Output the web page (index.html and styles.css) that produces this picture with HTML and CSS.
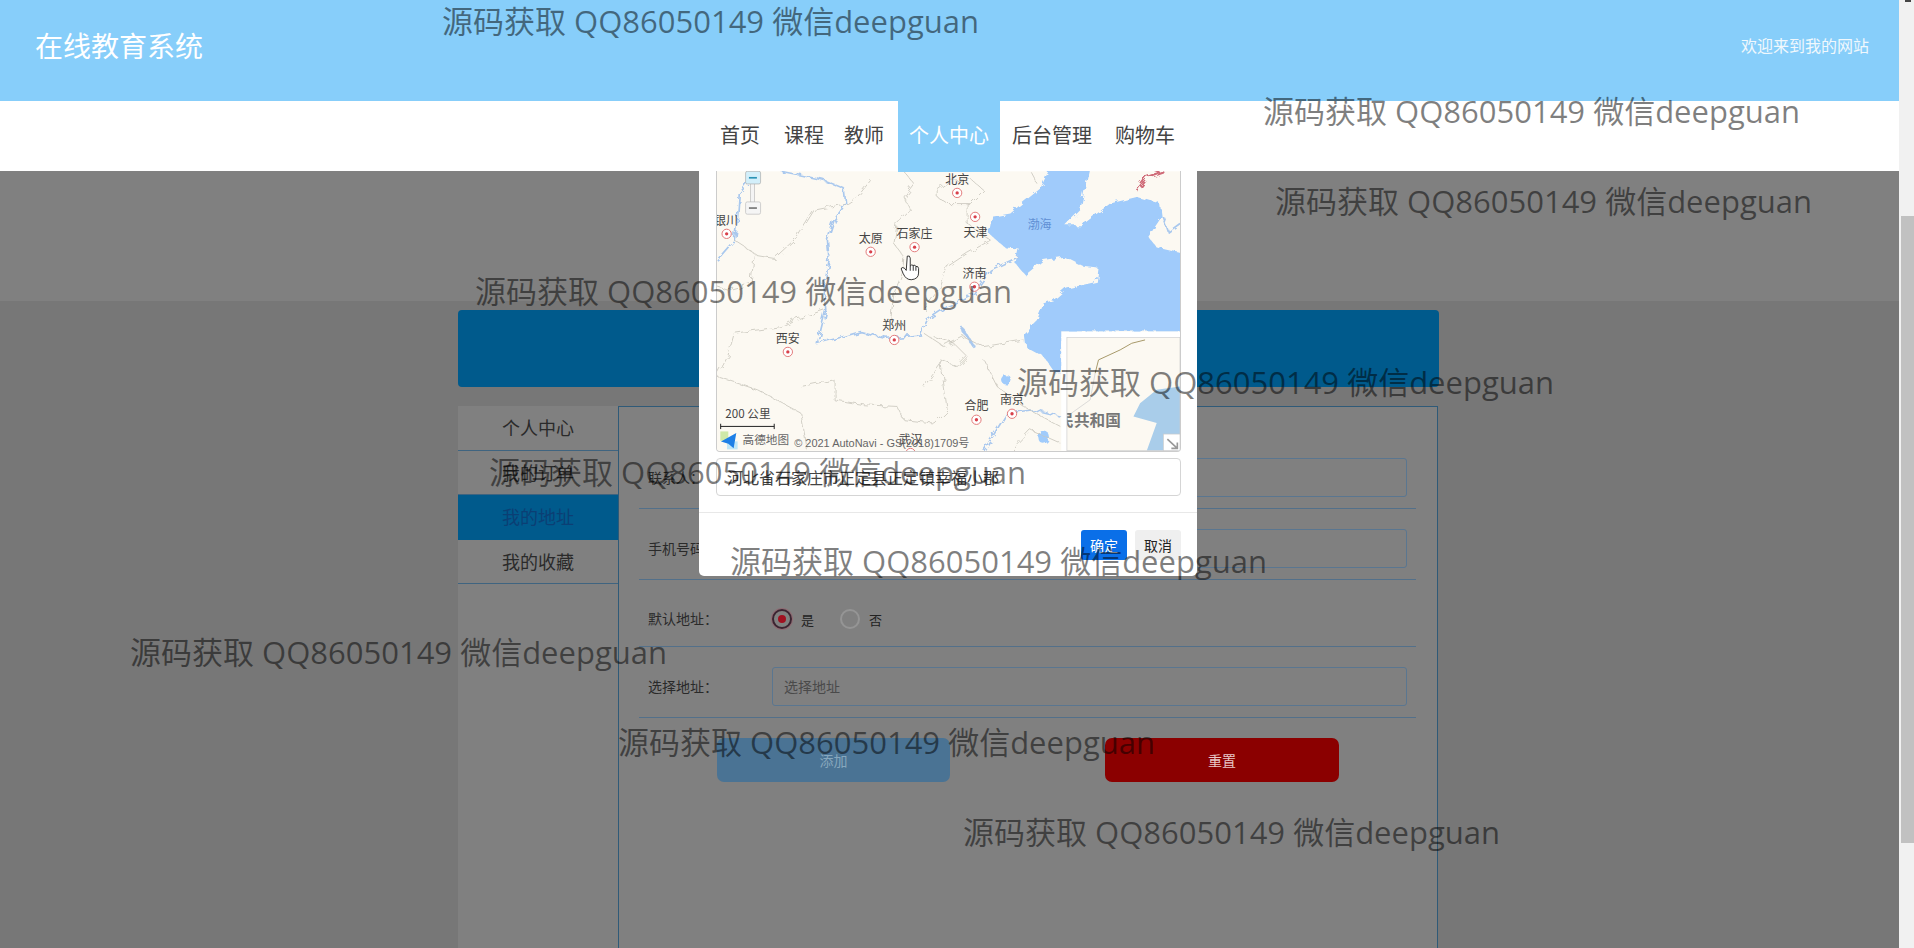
FILE: index.html
```html
<!DOCTYPE html>
<html lang="zh-CN">

<head>
    <meta charset="UTF-8">
    <title>在线教育系统</title>
    <link rel="stylesheet" href="styles.css">
</head>

<body>
    <div class="page">
        <div class="view">
            <header class="top">
                <div class="top-title">在线教育系统</div>
                <div class="top-hello">欢迎来到我的网站</div>
            </header>

            <nav class="nav">
                <a class="nav-item">首页</a>
                <a class="nav-item">课程</a>
                <a class="nav-item nav-tight">教师</a>
                <a class="nav-item nav-active">个人中心</a>
                <a class="nav-item nav-after">后台管理</a>
                <a class="nav-item">购物车</a>
            </nav>

            <main class="content">
                <div class="hero"></div>

                <section class="lower">
                    <div class="banner"></div>

                    <div class="account">
                        <ul class="side">
                            <li class="side-item">个人中心</li>
                            <li class="side-item">我的订单</li>
                            <li class="side-item side-active">我的地址</li>
                            <li class="side-item">我的收藏</li>
                        </ul>

                        <form class="panel">
                            <div class="row">
                                <label class="row-label">联系人：</label>
                                <input class="row-input" type="text">
                            </div>
                            <div class="row">
                                <label class="row-label">手机号码：</label>
                                <input class="row-input" type="text">
                            </div>
                            <div class="row row-radio">
                                <label class="row-label">默认地址：</label>
                                <span class="radio radio-on"></span>
                                <span class="radio-text">是</span>
                                <span class="radio"></span>
                                <span class="radio-text">否</span>
                            </div>
                            <div class="row">
                                <label class="row-label">选择地址：</label>
                                <input class="row-input" type="text" placeholder="选择地址">
                            </div>
                            <div class="actions">
                                <button class="btn btn-add" type="button">添加</button>
                                <button class="btn btn-reset" type="button">重置</button>
                            </div>
                        </form>
                    </div>
                </section>

                <!-- 地图弹窗 -->
                <div class="modal">
                    <div class="map">
                        <svg class="map-svg" viewBox="78 33 1392 840" xmlns="http://www.w3.org/2000/svg">
                            <defs>
                                <g id="city">
                                    <circle r="14" fill="#fff" stroke="#e27a7a" stroke-width="3"/>
                                    <circle r="5" fill="#d9404a"/>
                                </g>
                                <!-- 让海岸线和省界有点锯齿 -->
                                <filter id="rough" filterUnits="userSpaceOnUse" x="0" y="0" width="1600" height="1000">
                                    <feTurbulence type="fractalNoise" baseFrequency="0.045" numOctaves="2" seed="4"/>
                                    <feDisplacementMap in="SourceGraphic" scale="22"/>
                                </filter>
                            </defs>
                            <rect x="78" y="33" width="1392" height="840" fill="#fcf9f2"/>

                            <g filter="url(#rough)">
                                <!-- 渤海、黄海 -->
                                <path class="sea" d="M1085 10 L1050 85 L1000 125 L960 160 L905 170 L895 220 L945 262 L985 265 L975 310 L1005 345 L1060 300 L1120 290 L1180 320 L1225 325 L1220 365 L1130 385 L1090 420 L1060 430 L1040 480 L1000 520 L1005 560 L1060 590 L1095 640 L1113 640 L1113 515 L1500 515 L1500 285 L1400 262 L1375 230 L1415 170 L1410 130 L1340 110 L1260 130 L1175 195 L1125 195 L1170 150 L1200 10 Z"/>
                                <ellipse class="sea" cx="1060" cy="832" rx="16" ry="20"/>
                                <ellipse class="sea" cx="948" cy="660" rx="16" ry="14"/>
                                <path class="river river-thin" d="M815 505 L850 560"/>

                                <!-- 河流 -->
                                <path class="river" d="M270 33 L330 45 L400 60 L460 85 L465 130 L430 180 L410 240 L415 300 L400 380 L405 450 L380 550 L440 535 L510 515 L590 535 L690 525 L710 480 L770 440 L850 400 L900 330 L985 290"/>
                                <path class="river" d="M170 70 L145 100 L140 170 L130 240 L78 300"/>
                                <path class="river" d="M880 873 L950 760 L1030 750 L1113 770"/>
                                <path class="river" d="M1420 170 L1435 215 L1470 190"/>

                                <!-- 省界 -->
                                <path class="border" d="M640 33 L670 70 L640 110 L660 150 L620 190 L610 250 L640 290 L635 340 L610 400 L600 480"/>
                                <path class="border" d="M740 90 L780 60 L840 55 L880 90 L840 130 L770 130 L740 110 Z"/>
                                <path class="border" d="M540 60 L500 110 L470 130 L370 150 L320 230 L250 295 L190 285 L180 370 L110 390 L78 380"/>
                                <path class="border" d="M130 240 L200 285"/>
                                <path class="border" d="M400 450 L310 480 L270 500 L130 520 L110 590 L78 650"/>
                                <path class="border" d="M330 680 L430 660 L430 720 L520 735 L620 740 L640 780 L730 790 L770 750 L750 600 L800 620 L830 590 L790 550 L730 530"/>
                                <path class="border" d="M700 520 L760 560 L820 530 L880 560 L1000 540"/>
                                <path class="border" d="M900 240 L830 280 L770 320 L750 380 L700 450"/>
                                <path class="border" d="M78 650 L200 690 L330 760 L350 873"/>
                                <path class="border" d="M880 600 L920 680 L1000 740 L1110 800"/>
                                <path class="border" d="M700 680 L760 600"/>
                                <path class="border" d="M830 130 L830 190 L900 240"/>
                                <path class="border" d="M1020 33 L1040 70"/>
                                <path class="border" d="M960 873 L1020 810 L1110 850"/>
                                <path class="border-red" d="M1340 90 L1370 50 L1420 33"/>
                            </g>

                            <text class="sea-name" x="1048" y="206">渤海</text>
                            <text class="city" x="800" y="70">北京</text>
                            <text class="city" x="855" y="232">天津</text>
                            <text class="city" x="672" y="233">石家庄</text>
                            <text class="city" x="540" y="248">太原</text>
                            <text class="city" x="105" y="193">银川</text>
                            <text class="city" x="852" y="353">济南</text>
                            <text class="city" x="611" y="511">郑州</text>
                            <text class="city" x="291" y="548">西安</text>
                            <text class="city" x="858" y="752">合肥</text>
                            <text class="city" x="965" y="734">南京</text>
                            <text class="city" x="660" y="852">武汉</text>

                            <use href="#city" x="800" y="98"/>
                            <use href="#city" x="854" y="170"/>
                            <use href="#city" x="672" y="261"/>
                            <use href="#city" x="540" y="275"/>
                            <use href="#city" x="107" y="221"/>
                            <use href="#city" x="852" y="380"/>
                            <use href="#city" x="611" y="540"/>
                            <use href="#city" x="291" y="576"/>
                            <use href="#city" x="858" y="780"/>
                            <use href="#city" x="965" y="762"/>
                            <use href="#city" x="660" y="880"/>

                            <!-- 缩放控件 -->
                            <rect x="179" y="70" width="12" height="56" fill="#f4f4f4" stroke="#bbb" stroke-width="2"/>
                            <rect x="164" y="33" width="45" height="38" rx="5" fill="#d3effa" stroke="#aaa" stroke-width="2"/>
                            <rect x="174" y="50" width="24" height="5" fill="#2a93b5"/>
                            <rect x="164" y="125" width="45" height="37" rx="5" fill="#f5f5f5" stroke="#bbb" stroke-width="2"/>
                            <rect x="174" y="141" width="24" height="5" fill="#777"/>

                            <!-- 比例尺、版权 -->
                            <text class="scale" x="103" y="774">200 公里</text>
                            <path d="M89 792 V808 M89 800 H250 M250 792 V808" stroke="#222" stroke-width="3" fill="none"/>
                            <rect x="88" y="815" width="24" height="28" fill="#cfe8a8"/>
                            <rect x="108" y="845" width="32" height="24" fill="#bfe6f7"/>
                            <path d="M136 820 L90 845 L112 852 L128 866 Z" fill="#1e7fe6"/>
                            <text class="map-logo" x="155" y="854">高德地图</text>
                            <text class="copyright" x="310" y="862">© 2021 AutoNavi - GS(2018)1709号</text>

                            <!-- 鹰眼 -->
                            <rect x="1113" y="515" width="357" height="358" fill="#fff"/>
                            <svg x="1130" y="533" width="340" height="340" viewBox="1130 533 340 340">
                                <rect x="1130" y="533" width="340" height="340" fill="#fcf9f2"/>
                                <path d="M1470 680 L1400 690 L1350 730 L1330 770 L1400 790 L1370 873 L1470 873 Z" fill="#a9cdea"/>
                                <path d="M1130 770 L1200 720 L1215 640" fill="none" stroke="#ccc" stroke-width="2"/>
                                <path d="M1215 640 L1225 600 L1290 570 L1325 550 L1365 540" fill="none" stroke="#a89a6a" stroke-width="3"/>
                                <text class="inset-name" x="1104" y="798">民共和国</text>
                            </svg>
                            <rect x="1130" y="533" width="340" height="340" fill="none" stroke="#ccc" stroke-width="2"/>
                            <rect x="1420" y="823" width="50" height="50" fill="#fff" stroke="#ccc" stroke-width="2"/>
                            <path d="M1432 838 L1462 866 M1462 848 V866 H1444" stroke="#999" stroke-width="5" fill="none"/>

                            <!-- 鼠标 -->
                            <path d="M650 288 q8 -3 9 6 v24 q4 -6 9 -2 q6 -3 8 3 q7 -2 8 6 v14 q0 18 -22 20 q-16 0 -24 -18 l-6 -14 q0 -8 10 -2 l5 6 z M659 318 v14 M668 316 v16 M676 319 v13" fill="#fff" stroke="#111" stroke-width="2.5"/>
                        </svg>
                    </div>

                    <input class="modal-input" type="text" value="河北省石家庄市正定县正定镇幸福小郡">

                    <div class="modal-foot">
                        <button class="modal-btn modal-ok" type="button">确定</button>
                        <button class="modal-btn modal-cancel" type="button">取消</button>
                    </div>
                </div>
            </main>
        </div>

        <div class="scrollbar">
            <div class="scroll-arrow"></div>
            <div class="scroll-thumb"></div>
        </div>
    </div>

    <!-- 水印 -->
    <div class="wm wm-1">源码获取 QQ86050149 微信deepguan</div>
    <div class="wm wm-2">源码获取 QQ86050149 微信deepguan</div>
    <div class="wm wm-3">源码获取 QQ86050149 微信deepguan</div>
    <div class="wm wm-4">源码获取 QQ86050149 微信deepguan</div>
    <div class="wm wm-5">源码获取 QQ86050149 微信deepguan</div>
    <div class="wm wm-6">源码获取 QQ86050149 微信deepguan</div>
    <div class="wm wm-7">源码获取 QQ86050149 微信deepguan</div>
    <div class="wm wm-8">源码获取 QQ86050149 微信deepguan</div>
    <div class="wm wm-9">源码获取 QQ86050149 微信deepguan</div>
    <div class="wm wm-10">源码获取 QQ86050149 微信deepguan</div>
</body>

</html>
```

FILE: styles.css
```css
* {
    box-sizing: border-box;
}

html,
body {
    margin: 0;
    height: 948px;
    overflow: hidden;
}

body {
    position: relative;
    font-family: "Open Sans", "Noto Sans CJK SC", sans-serif;
    color: #111;
}

.page {
    display: flex;
    height: 948px;
}

.view {
    flex: 1;
    display: flex;
    flex-direction: column;
    min-width: 0;
}

/* 顶部 */
.top {
    height: 101px;
    padding: 0 30px 11px 35px;
    background-color: #87cefa;
    color: #fff;
    display: flex;
    justify-content: space-between;
    align-items: center;
}

.top-title {
    font-size: 28px;
}

.top-hello {
    font-size: 16px;
    color: #f0f8fd;
}

/* 导航 */
.nav {
    position: relative;
    z-index: 5;
    height: 70px;
    padding-right: 4px;
    background-color: #fff;
    display: flex;
    justify-content: center;
}

.nav-item {
    height: 70px;
    line-height: 70px;
    padding: 0 10px;
    font-size: 20px;
    color: #444;
}

.nav-item + .nav-item {
    margin-left: 4px;
}

.nav-item + .nav-tight {
    margin-left: 0;
}

.nav-item + .nav-after {
    margin-left: 2px;
}

.nav-item + .nav-active {
    margin-left: 4px;
}

.nav-item:last-child {
    margin-left: 3px;
}

.nav-active {
    height: 71px;
    padding: 0 11px;
    background-color: #87cefa;
    color: #fff;
}

/* 内容（遮罩后的颜色） */
.content {
    position: relative;
    flex: 1;
    display: flex;
    flex-direction: column;
    min-height: 0;
}

.hero {
    height: 130px;
    background-color: #808080;
}

.lower {
    flex: 1;
    min-height: 0;
    padding-top: 9px;
    background-color: #777;
}

.banner {
    width: 981px;
    height: 77px;
    margin-left: 458px;
    background-color: #005a8c;
    border-radius: 4px;
}

.account {
    width: 980px;
    height: 600px;
    margin: 19px 0 0 458px;
    background-color: #808080;
    display: flex;
}

.side {
    width: 160px;
    margin: 0;
    padding: 0;
    list-style: none;
}

.side-item {
    height: 44.6px;
    line-height: 44px;
    text-align: center;
    font-size: 18px;
    color: #2a2a2a;
    border-bottom: 1px solid #3f6480;
}

.side-active {
    background-color: #005a8c;
    color: #0b3f74;
    border-bottom: none;
}

.panel {
    width: 820px;
    padding: 31px 21px 0 20px;
    border: 1px solid #2f5a78;
    border-bottom: none;
}

.row {
    padding: 20px 0 11px;
    border-bottom: 1px solid #53708a;
    display: flex;
    align-items: center;
}

.row-label {
    width: 133px;
    padding: 0 0 2px 9px;
    font-size: 14px;
    color: #2a2a2a;
}

.row-input {
    width: 635px;
    height: 39px;
    padding: 0 11px;
    background: transparent;
    border: 1px solid #5a7690;
    border-radius: 3px;
    font-family: inherit;
    font-size: 14px;
}

.row-input::placeholder {
    color: #4a4a4a;
}

.row-radio {
    height: 67px;
    padding: 29px 0 17px;
}

.radio {
    width: 20px;
    height: 20px;
    border: 2px solid #959595;
    border-radius: 50%;
    display: flex;
    align-items: center;
    justify-content: center;
}

.radio-on {
    border-color: #3c2330;
    box-shadow: 0 0 0 1px #8f6a72;
}

.radio-on::after {
    content: "";
    width: 8px;
    height: 8px;
    border-radius: 50%;
    background-color: #a01020;
}

.radio-text {
    width: 48px;
    padding-left: 9px;
    font-size: 13px;
    color: #222;
}

.actions {
    margin-top: 20px;
    padding-left: 78px;
    display: flex;
    gap: 155px;
}

.btn {
    width: 233px;
    height: 44px;
    border: none;
    border-radius: 7px;
    font-family: inherit;
    font-size: 14px;
}

.btn-add {
    background-color: #4a7394;
    color: #87a7bd;
}

.btn-reset {
    width: 234px;
    background-color: #8b0000;
    color: #e8c8c8;
}

/* 弹窗 */
.modal {
    position: absolute;
    z-index: 3;
    top: 0;
    left: 699px;
    width: 498px;
    height: 405px;
    padding: 0 16px 0 17px;
    background-color: #fff;
    border-radius: 0 0 5px 5px;
}

.map {
    height: 281px;
    margin-bottom: 6px;
    border: 1px solid #ccc;
    border-top: none;
    border-radius: 0 0 4px 4px;
    overflow: hidden;
}

.map-svg {
    display: block;
    width: 100%;
    height: 100%;
}

.sea {
    fill: #a0cbfb;
}

.river {
    fill: none;
    stroke: #a9c8ee;
    stroke-width: 5;
}

.river-thin {
    stroke-width: 8;
}

.border {
    fill: none;
    stroke: #c9c6bd;
    stroke-width: 2.5;
}

.border-red {
    fill: none;
    stroke: #cf6b78;
    stroke-width: 6;
}

.city,
.sea-name {
    font-family: "Noto Sans CJK SC", sans-serif;
    font-size: 36px;
    text-anchor: middle;
    fill: #444;
}

.sea-name {
    fill: #5f8fd4;
}

.scale {
    font-family: "Noto Sans CJK SC", sans-serif;
    font-size: 35px;
    fill: #444;
}

.map-logo {
    font-family: "Noto Sans CJK SC", sans-serif;
    font-size: 35px;
    fill: #666;
}

.copyright {
    font-family: "Liberation Sans", "Noto Sans CJK SC", sans-serif;
    font-size: 33px;
    fill: #666;
}

.inset-name {
    font-family: "Noto Sans CJK SC", sans-serif;
    font-size: 47px;
    font-weight: 700;
    fill: #777;
}

.modal-input {
    display: block;
    width: 100%;
    height: 38px;
    padding: 0 10px;
    border: 1px solid #d5d5d5;
    border-radius: 4px;
    font-family: inherit;
    font-size: 16px;
    color: #444;
}

.modal-foot {
    margin: 16px -16px 0 -17px;
    padding: 17px 16px 0 0;
    border-top: 1px solid #e8e8e8;
    display: flex;
    justify-content: flex-end;
    gap: 8px;
}

.modal-btn {
    width: 46px;
    height: 30px;
    padding: 0;
    border: none;
    border-radius: 3px;
    font-family: inherit;
    font-size: 14px;
}

.modal-ok {
    background-color: #0a6fe8;
    color: #fff;
}

.modal-cancel {
    background-color: #efefef;
    color: #222;
}

/* 滚动条 */
.scrollbar {
    width: 15px;
    padding-left: 2px;
    background-color: #f1f1f1;
}

.scroll-arrow {
    width: 6px;
    height: 2px;
    margin: 0 auto 214px;
    background-color: #444;
}

.scroll-thumb {
    height: 627px;
    background-color: #c1c1c1;
}

/* 水印 */
.wm {
    position: absolute;
    z-index: 10;
    white-space: nowrap;
    font-size: 31px;
    line-height: 40px;
    color: rgba(0, 0, 0, 0.5);
}

.wm-1 { left: 442px; top: 1px; }
.wm-2 { left: 1263px; top: 91px; }
.wm-3 { left: 1275px; top: 181px; }
.wm-4 { left: 475px; top: 271px; }
.wm-5 { left: 1017px; top: 362px; }
.wm-6 { left: 489px; top: 452px; }
.wm-7 { left: 730px; top: 541px; }
.wm-8 { left: 130px; top: 632px; }
.wm-9 { left: 618px; top: 722px; }
.wm-10 { left: 963px; top: 812px; }
```
